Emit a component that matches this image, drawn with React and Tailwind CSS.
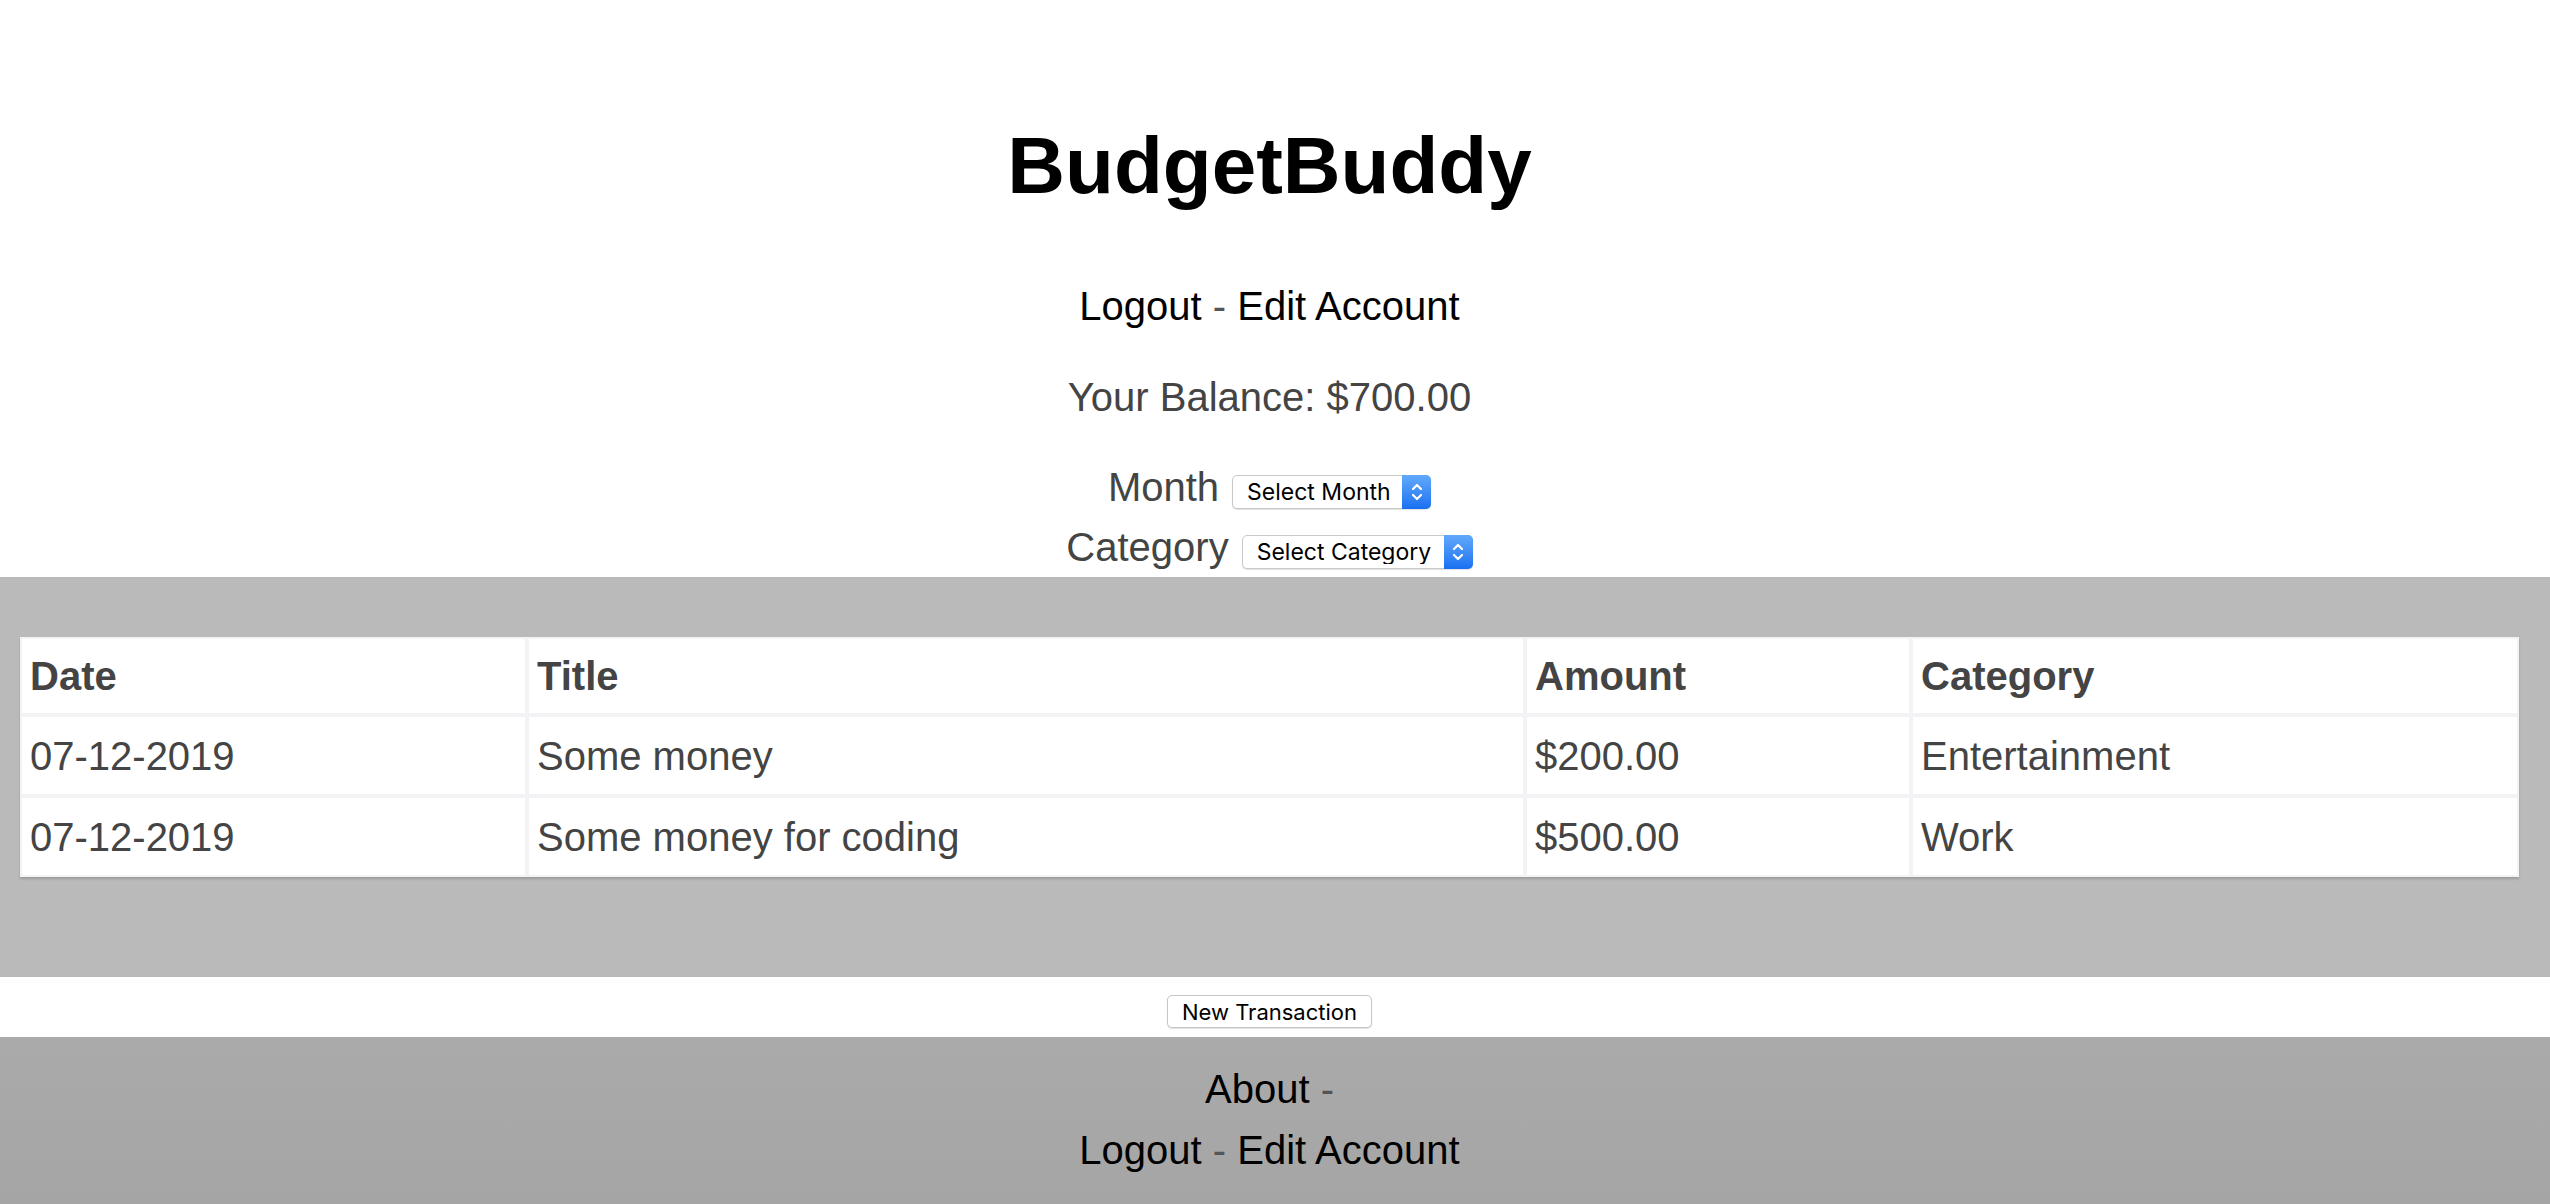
import React from "react";

const transactions = [
  { date: "07-12-2019", title: "Some money", amount: "$200.00", category: "Entertainment" },
  { date: "07-12-2019", title: "Some money for coding", amount: "$500.00", category: "Work" },
];

// mac style arrows on the right of the select
const Chevrons = () => (
  <svg width="14" height="24" viewBox="0 0 14 24" fill="none" stroke="white" strokeWidth="2.2" strokeLinecap="round" strokeLinejoin="round">
    <path d="M3 9 L7 5 L11 9" />
    <path d="M3 15 L7 19 L11 15" />
  </svg>
);

const SelectBox = ({ placeholder, width }) => (
  <div className={`relative mt-[10px] ${width}`}>
    <select
      defaultValue=""
      className="appearance-none w-full h-[34px] rounded-[5px] border border-[#c9c9c9] bg-white pl-[14px] pr-[34px] font-['Inter',sans-serif] text-[23px] leading-none text-black shadow-[0_1px_1px_rgba(0,0,0,0.12)] focus:outline-none"
    >
      <option value="" disabled>
        {placeholder}
      </option>
    </select>
    <span className="pointer-events-none absolute right-0 top-0 flex h-[34px] w-[29px] items-center justify-center rounded-r-[5px] bg-gradient-to-b from-[#62a9fb] to-[#1870f0]">
      <Chevrons />
    </span>
  </div>
);

const NavLinks = () => (
  <p className="text-[40px] leading-none text-black">
    <a href="#">Logout</a>
    <span className="text-[#555]"> - </span>
    <a href="#">Edit Account</a>
  </p>
);

export default function App() {
  return (
    <div className="min-h-screen bg-white font-['Liberation_Sans',Arial,sans-serif]">
      {/* HEADER */}
      <header className="flex flex-col items-center pr-[11px] text-center">
        <h1 className="mt-[126px] text-[80px] font-bold leading-none text-black">BudgetBuddy</h1>
        <div className="mt-[80px]">
          <NavLinks />
        </div>
        <p className="mt-[51px] text-[40px] leading-none text-[#444]">Your Balance: $700.00</p>

        <div className="mt-[40px] flex h-[60px] items-center justify-center gap-[13px]">
          <span className="text-[40px] leading-none text-[#444]">Month</span>
          <SelectBox placeholder="Select Month" width="w-[199px]" />
        </div>
        <div className="flex h-[60px] items-center justify-center gap-[13px]">
          <span className="text-[40px] leading-none text-[#444]">Category</span>
          <SelectBox placeholder="Select Category" width="w-[231px]" />
        </div>
      </header>

      {/* TABLE */}
      <section className="bg-[#bababa] pt-[60px] pb-[100px] pl-5 pr-[31px]">
        <table className="w-full table-fixed border-separate border-spacing-0 bg-white text-left text-[40px] leading-none text-[#444] shadow-[0_2px_2px_rgba(0,0,0,0.16)]">
          <thead>
            <tr>
              <th className="h-[78px] w-[507px] border-2 border-[#f3f3f5] px-2 font-bold">Date</th>
              <th className="h-[78px] w-[998px] border-2 border-[#f3f3f5] px-2 font-bold">Title</th>
              <th className="h-[78px] w-[386px] border-2 border-[#f3f3f5] px-2 font-bold">Amount</th>
              <th className="h-[78px] border-2 border-[#f3f3f5] px-2 font-bold">Category</th>
            </tr>
          </thead>
          <tbody>
            {transactions.map((t, i) => (
              <tr key={i}>
                <td className="h-[81px] border-2 border-[#f3f3f5] px-2">{t.date}</td>
                <td className="h-[81px] border-2 border-[#f3f3f5] px-2">{t.title}</td>
                <td className="h-[81px] border-2 border-[#f3f3f5] px-2">{t.amount}</td>
                <td className="h-[81px] border-2 border-[#f3f3f5] px-2">{t.category}</td>
              </tr>
            ))}
          </tbody>
        </table>
      </section>

      <div className="flex justify-center pt-[18px] pb-[9px] pr-[11px]">
        <button className="h-[33px] w-[205px] rounded-[5px] border border-[#c6c6c6] bg-white font-['Inter',sans-serif] text-[22px] leading-none text-black shadow-[0_1px_1px_rgba(0,0,0,0.12)]">
          New Transaction
        </button>
      </div>

      {/* FOOTER */}
      <footer className="flex flex-col items-center bg-gradient-to-b from-[#aaaaaa] to-[#a5a5a5] pt-[32px] pb-[40px] pr-[11px] text-center">
        <p className="text-[40px] leading-none text-black">
          <a href="#">About</a>
          <span className="text-[#555]"> -</span>
        </p>
        <div className="mt-[21px]">
          <NavLinks />
        </div>
      </footer>
    </div>
  );
}
